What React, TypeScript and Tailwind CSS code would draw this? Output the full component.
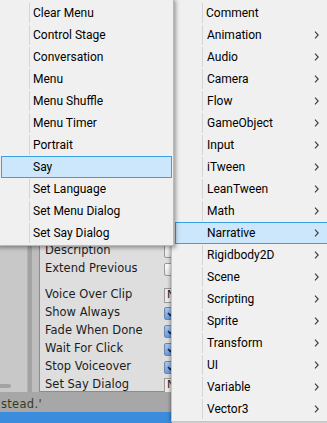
import React from "react"

const leftItems = [
  "Clear Menu",
  "Control Stage",
  "Conversation",
  "Menu",
  "Menu Shuffle",
  "Menu Timer",
  "Portrait",
  "Say",
  "Set Language",
  "Set Menu Dialog",
  "Set Say Dialog",
]

const rightItems = [
  "Comment",
  "Animation",
  "Audio",
  "Camera",
  "Flow",
  "GameObject",
  "Input",
  "iTween",
  "LeanTween",
  "Math",
  "Narrative",
  "Rigidbody2D",
  "Scene",
  "Scripting",
  "Sprite",
  "Transform",
  "UI",
  "Variable",
  "Vector3",
]

type Kind = "light" | "blue" | "field"

const rows: { label: string; kind: Kind; gap?: boolean }[] = [
  { label: "Description", kind: "light" },
  { label: "Extend Previous", kind: "light" },
  { label: "Voice Over Clip", kind: "field", gap: true },
  { label: "Show Always", kind: "blue" },
  { label: "Fade When Done", kind: "blue" },
  { label: "Wait For Click", kind: "blue" },
  { label: "Stop Voiceover", kind: "blue" },
  { label: "Set Say Dialog", kind: "field" },
]

function Chevron() {
  return (
    <svg width="5" height="8" viewBox="0 0 5 8" className="shrink-0">
      <path d="M1 0.6 L4.2 4 L1 7.4" fill="none" stroke="#3a3a3a" strokeWidth="1.1" />
    </svg>
  )
}

function MenuItem({
  label,
  active,
  gutter,
  sub,
}: {
  label: string
  active?: boolean
  gutter: string
  sub?: boolean
}) {
  return (
    <div
      className={
        "flex h-[22px] items-stretch border " +
        (active ? "border-[#3a9fe3] bg-[#cce6fb]" : "border-transparent")
      }
    >
      <div className={"shrink-0 " + gutter} />
      <div
        className={
          "flex items-center border-l pl-[3px] " +
          (active ? "border-transparent" : "border-[#d5d5d5]")
        }
      >
        <span className={sub ? "w-[108px] shrink-0 pl-[1px]" : ""}>{label}</span>
        {sub && <Chevron />}
      </div>
    </div>
  )
}

function Control({ kind }: { kind: Kind }) {
  if (kind === "field")
    return (
      <div className="flex h-[15px] w-[24px] shrink-0 items-center border border-[#999] bg-[#ececec] pl-[2px] text-[11px] text-[#222]">
        N
      </div>
    )
  if (kind === "blue")
    return (
      <div className="flex h-[13px] w-[14px] shrink-0 items-center justify-center rounded-[2px] border border-[#6d87a8] bg-[linear-gradient(#a9c8ee,#6b9be0)]">
        <svg width="8" height="7" viewBox="0 0 8 7">
          <path d="M1 3 L3.3 5.5 L7 1" fill="none" stroke="#1b2a44" strokeWidth="1.6" />
        </svg>
      </div>
    )
  return (
    <div className="h-[13px] w-[14px] shrink-0 rounded-[2px] border border-[#9a9a9a] bg-[linear-gradient(#fdfdfd,#e2e2e2)]" />
  )
}

export default function App() {
  return (
    <div className="relative h-[423px] w-[327px] overflow-hidden bg-[#f0f0f0] font-['Roboto',sans-serif] text-[12px] text-black">
      {/* editor background */}
      <div className="flex h-full w-full flex-col">
        <div className="flex flex-1">
          <div className="flex w-[28px] shrink-0 flex-col justify-end border-r border-[#b3b3b3] bg-[#c8c8c8] pb-[4px]">
            <div className="h-[4px] w-[11px] rounded-r-full bg-[#a3a3a3]" />
          </div>
          <div className="w-[4px] shrink-0 bg-[#a2a2a2]" />
          <div className="w-[7px] shrink-0 bg-[#bdbdbd]" />
          <div className="flex flex-1 flex-col justify-end border-b border-l border-[#8c8c8c] bg-[#dedede] pl-[5px] font-['DejaVu_Sans',sans-serif] text-[11.5px] text-[#1c1c1c]">
            {rows.map((r) => (
              <div key={r.label} className={"flex h-[18px] items-center pt-[6px] " + (r.gap ? "mt-[8px]" : "")}>
                <span className="w-[119px] shrink-0">{r.label}</span>
                <Control kind={r.kind} />
              </div>
            ))}
          </div>
        </div>
        <div className="flex h-[20px] items-center bg-[#a7a7a7] pl-[1px] pt-[5px] font-['DejaVu_Sans',sans-serif] text-[11.5px] tracking-[0.3px] text-[#3a3a1c]">
          stead.'
        </div>
        <div className="h-[11px] w-[172px] bg-[#3b8cdc]" />
      </div>

      {/* category menu */}
      <div className="absolute left-[171px] top-[-2px] w-[170px] border border-[#c4c4c4] bg-[#f0f0f0] pb-[1px] pl-[3px] pt-[3px] shadow-[-1px_0_3px_rgba(0,0,0,0.35)]">
        {rightItems.map((item) => (
          <MenuItem
            key={item}
            label={item}
            gutter="w-[26px]"
            active={item === "Narrative"}
            sub={item !== "Comment"}
          />
        ))}
      </div>

      {/* narrative submenu */}
      <div className="absolute left-[-4px] top-[-2px] w-[178px] border border-[#b9b9b9] bg-[#f0f0f0] pb-[1px] pl-[4px] pr-[1px] pt-[3px] shadow-[2px_2px_4px_rgba(0,0,0,0.35)]">
        {leftItems.map((item) => (
          <MenuItem key={item} label={item} gutter="w-[27px]" active={item === "Say"} />
        ))}
      </div>
    </div>
  )
}
